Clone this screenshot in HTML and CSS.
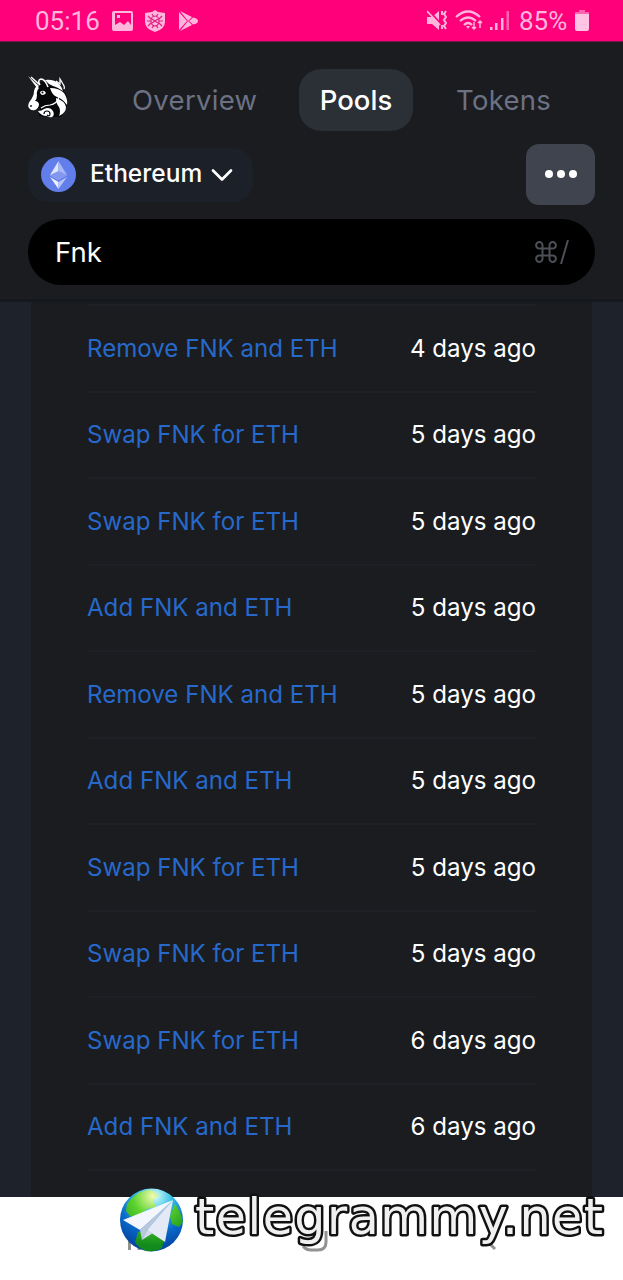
FILE: index.html
```html
<!DOCTYPE html>
<html lang="en">
<head>
	<meta charset="utf-8">
	<title>Uniswap Info</title>
	<link rel="stylesheet" href="styles.css">
</head>
<body>
	<div class="status-bar">
		<span class="clock">05:16</span>
		<svg class="status-left" width="90" height="24" viewBox="0 0 90 24">
			<path fill="#ffb5dc" fill-rule="evenodd" d="M1 2h18q2 0 2 2v16q0 2-2 2H2q-2 0-2-2V4q0-2 2-2zM3 4v12l5-3 4 3 4-4 3 4V4zM5 6h3v3H5z"/>
			<path fill="#ffb5dc" d="M43 1l3 2 7 1v9q0 7-10 10-10-3-10-10V4l7-1z"/>
			<g stroke="#d92383" stroke-width="1.2" fill="none">
				<path d="M36 7l3 3m-4 2h4m-3 5l3-3M50 7l-3 3m4 2h-4m3 5l-3-3M40 5l2 3m4-3l-2 3M40 19l2-3m4 3l-2-3"/>
				<ellipse cx="43" cy="12" rx="4" ry="5"/>
				<path d="M40 10l6 4m0-4l-6 4"/>
			</g>
			<path fill="#ffb5dc" d="M67 3v18l8-9zM68 2l12 6-4 4zM68 22l12-6-4-4z"/>
			<path fill="#ffb5dc" d="M77 12l4-3.500q5 1 5 3.500t-5 3.500z"/>
		</svg>
		<svg class="status-right" width="86" height="24" viewBox="0 0 86 24">
			<path fill="#ffb5dc" d="M0 8h5l7-6v19l-7-6H0z"/>
			<path stroke="#ff007a" stroke-width="2" d="M1 1l13 14"/>
			<path stroke="#ffb5dc" stroke-width="1.8" d="M0 2l13 14" fill="none"/>
			<path stroke="#ffb5dc" stroke-width="2" fill="none" d="M15 2v4M15 16v4M19 2l-2 3 2 3-2 3 2 3-2 3 2 3"/>
			<g stroke="#ffb5dc" stroke-width="2.2" fill="none">
				<path d="M29 8q12-11 24 0M33 12q8-7 16 0M37 16q4-4 8 0"/>
				<path stroke-width="1.500" d="M47 13v7m-2-2l2 2 2-2M53 19v-7m-2 2l2-2 2 2"/>
			</g>
			<path fill="#ffb5dc" d="M39 17h4l-2 3zM63 18h2.500v3H63zM68 14h2.500v7H68zM74 9h2.500v12H74z"/>
			<path fill="#ff63af" d="M79.500 2H82v19h-2.500z"/>
		</svg>
		<span class="battery-level">85%</span>
		<svg class="battery" width="14" height="21" viewBox="0 0 14 21">
			<path fill="#ff63af" d="M4 0h6v2h4v3H0V2h4z"/>
			<path fill="#ffc4e3" d="M0 4h14v15q0 2-2 2H2q-2 0-2-2z"/>
		</svg>
	</div>

	<header class="header">
		<nav class="nav">
			<svg class="logo" width="42" height="44" viewBox="0 0 42 44">
				<path fill="#060709" d="M8 11l5-5 10-1 9 4 7 11v10l-6 11-22-1 1-8-6 1z"/>
				<!-- horn and ear -->
				<path fill="#fff" d="M0 0l11 10-2 2z"/>
				<path fill="none" stroke="#fff" stroke-width="1.500" d="M3 1l9 8M12 9q-3-5 1-6 4 0 7 8"/>
				<!-- face -->
				<path fill="#fff" d="M9 10l2 2q-3 3-2 7 0 4-2 6 3 0 4 3 0 4-4 6-4 1-6-2-2-3 1-7 4-5 4-10 0-3 3-5z"/>
				<path fill="#fff" d="M12 16q4-3 6 1-1 2-4 2-2-1-2-3z"/>
				<circle cx="14.500" cy="16.500" r="1" fill="#060709"/>
				<circle cx="3" cy="30" r=".9" fill="#060709"/>
				<!-- mane -->
				<path fill="#fff" d="M17 4q9-1 14 4 3 3 4 7-6-4-10-5-5-2-8-6z"/>
				<path fill="none" stroke="#fff" stroke-width="1.300" d="M28 5l4 3V3l3 5q2 3 1 5"/>
				<path fill="#fff" d="M22 12q9 0 14 5 4 6 3 12-4-6-10-8-5-2-7-9z"/>
				<path fill="#fff" d="M28 22q9 3 10 9 0 6-7 9 2-5 0-9-3-3-3-9z"/>
				<path fill="none" stroke="#fff" stroke-width="1.200" d="M31 21q-2 7-9 8-5 0-9 3"/>
				<!-- neck curl -->
				<path fill="#fff" d="M10 35q4 0 6-2 6-3 9 2 2 4-1 6-3 1-5-1-6 0-9-5z"/>
				<path fill="none" stroke="#060709" stroke-width="1.200" d="M16 38q0-3 3-3t3 3-3 1"/>
			</svg>
			<a class="nav-link overview">Overview</a>
			<a class="nav-link active">Pools</a>
			<a class="nav-link tokens">Tokens</a>
		</nav>
		<div class="toolbar">
			<div class="network">
				<svg width="35" height="35" viewBox="0 0 35 35">
					<circle cx="17.500" cy="17.500" r="17.500" fill="#627eea"/>
					<path fill="#dfe5fb" d="M17.500 4L9 18l8.500 5z"/>
					<path fill="#a9b8f4" d="M17.500 4L26 18l-8.500 5z"/>
					<path fill="#8297ed" d="M9 18l8.500-4 8.500 4-8.500 5z"/>
					<path fill="#eef1fd" d="M9 20l8.500 5v7z"/>
					<path fill="#b7c4f6" d="M26 20l-8.500 5v7z"/>
				</svg>
				<span>Ethereum</span>
				<svg class="chevron" width="22" height="14" viewBox="0 0 22 14">
					<path d="M2 2.500l9 9 9-9" fill="none" stroke="#fff" stroke-width="2.700" stroke-linecap="round" stroke-linejoin="round"/>
				</svg>
			</div>
			<div class="more"><i></i><i></i><i></i></div>
		</div>
		<div class="search">
			<span>Fnk</span>
			<span class="shortcut">
				<svg width="22" height="22" viewBox="0 0 22 22" fill="none" stroke="#4c4f55" stroke-width="2">
					<path d="M7.500 7.500h7v7h-7zM7.500 7.500H4.500a3.200 3.200 0 1 1 3-3zM14.500 7.500v-3a3.200 3.200 0 1 1 3 3zM14.500 14.500h3a3.200 3.200 0 1 1-3 3zM7.500 14.500v3a3.200 3.200 0 1 1-3-3z"/>
				</svg>
				<svg width="9" height="26" viewBox="0 0 9 26">
					<path d="M8 1L1 25" stroke="#4c4f55" stroke-width="2"/>
				</svg>
			</span>
		</div>
	</header>

	<main class="page">
		<div class="transactions">
			<div class="row"><a>Remove FNK and ETH</a><span>4 days ago</span></div>
			<div class="row"><a>Swap FNK for ETH</a><span>5 days ago</span></div>
			<div class="row"><a>Swap FNK for ETH</a><span>5 days ago</span></div>
			<div class="row"><a>Add FNK and ETH</a><span>5 days ago</span></div>
			<div class="row"><a>Remove FNK and ETH</a><span>5 days ago</span></div>
			<div class="row"><a>Add FNK and ETH</a><span>5 days ago</span></div>
			<div class="row"><a>Swap FNK for ETH</a><span>5 days ago</span></div>
			<div class="row"><a>Swap FNK for ETH</a><span>5 days ago</span></div>
			<div class="row"><a>Swap FNK for ETH</a><span>6 days ago</span></div>
			<div class="row"><a>Add FNK and ETH</a><span>6 days ago</span></div>
		</div>
	</main>

	<footer class="nav-bar">
		<svg width="623" height="83" viewBox="0 0 623 83" fill="none" stroke="#929292" stroke-width="3">
			<path d="M129.500 42v11M139 47v6M303 49q3 4 8 4h7q8 0 8-8V34M489 46l6 6"/>
		</svg>
	</footer>

	<div class="watermark">
		<svg width="503" height="75" viewBox="0 0 503 75">
			<defs>
				<radialGradient id="sea" cx="55%" cy="12%" r="90%">
					<stop offset="0" stop-color="#d9fff5"/>
					<stop offset=".3" stop-color="#36bfe8"/>
					<stop offset=".65" stop-color="#0868c9"/>
					<stop offset="1" stop-color="#063d9b"/>
				</radialGradient>
				<radialGradient id="land" gradientUnits="userSpaceOnUse" cx="33" cy="8" r="50">
					<stop offset="0" stop-color="#f1fbb0"/>
					<stop offset=".4" stop-color="#5cd32c"/>
					<stop offset="1" stop-color="#128a1c"/>
				</radialGradient>
			</defs>
			<circle cx="31.500" cy="32" r="31.500" fill="url(#sea)"/>
			<path fill="url(#land)" d="M7 16Q17 2 31 2l8 5-6 5 3 7-9 2-8 8-9-1-4-5zM55 16q6 8 8 18l-4 5-7-3-2-8zM18 44l12-2 14 10-2 8q-7 4-16 3-9-4-11-9z"/>
			<!-- paper plane -->
			<path fill="#f3f7fd" d="M3 32L53 12 20 42z"/>
			<path fill="#b9c7dd" d="M20 42l33-30-26 30-5 10z"/>
			<path fill="#e3eaf5" d="M27 42l26-30-8 42z"/>
			<path fill="#d0daeb" d="M22 52l5-10 6 3z"/>
			<text class="watermark-text" x="75" y="46" textLength="408">telegrammy.net</text>
		</svg>
	</div>
</body>
</html>
```
FILE: styles.css
```css
* {
	box-sizing: border-box;
}
body {
	font-family: Inter, "Liberation Sans", sans-serif;
	margin: 0;
	height: 1280px;
	overflow: hidden;
	position: relative;
	background-color: #fff;
	color: #fff;
}
svg {
	display: block;
	flex: none;
}
.status-bar {
	display: flex;
	align-items: center;
	height: 42px;
	padding: 0 34px 0 35px;
	background-color: #ff007a;
	border-bottom: 1px solid #7d1245;
	font-family: Roboto, sans-serif;
	font-size: 26px;
	color: #ffb5dc;
}
.clock {
	width: 77px;
}
.status-right {
	margin-left: auto;
}
.battery-level {
	width: 49px;
	margin: 0 7px 0 6px;
	font-size: 26px;
	white-space: nowrap;
}
.header {
	height: 260px;
	padding: 27px 28px 0;
	background-color: #1a1c20;
	border-bottom: 3px solid #15181c;
}
.nav {
	display: flex;
	align-items: center;
	height: 62px;
}
.logo {
	margin-top: -4px;
}
.nav-link {
	font-size: 27.5px;
	color: #6c7284;
}
.overview {
	width: 167px;
	margin-left: 62px;
	letter-spacing: 0.3px;
}
.active {
	width: 114px;
	line-height: 62px;
	text-align: center;
	border-radius: 22px;
	background-color: #2b2f36;
	font-weight: 500;
	color: #fff;
}
.tokens {
	margin-left: 43px;
	letter-spacing: 0.3px;
}
.toolbar {
	display: flex;
	justify-content: space-between;
	align-items: center;
	height: 61px;
	margin-top: 13px;
}
.network {
	display: flex;
	align-items: center;
	width: 225px;
	height: 54px;
	padding-left: 13px;
	border-radius: 20px;
	background-color: #1c2028;
	font-size: 24.5px;
	font-weight: 500;
}
.network span {
	margin: -3px 0 0 14px;
	width: 121px;
}
.more {
	display: flex;
	justify-content: center;
	align-items: center;
	gap: 4px;
	width: 69px;
	height: 61px;
	padding-bottom: 2px;
	border-radius: 13px;
	background-color: #40444f;
}
.more i {
	width: 8px;
	height: 8px;
	border-radius: 50%;
	background-color: #fff;
}
.search {
	display: flex;
	justify-content: space-between;
	align-items: center;
	height: 66px;
	margin-top: 14px;
	padding: 0 26px 0 27px;
	border-radius: 33px;
	background-color: #000;
	font-size: 27.5px;
}
.shortcut {
	display: flex;
	align-items: center;
	gap: 3px;
}
.page {
	height: 895px;
	padding: 0 31px;
	background-color: #1e222a;
}
.transactions {
	height: 895px;
	padding: 2px 56px 0;
	background-color: #1a1c1f;
}
.row {
	display: flex;
	justify-content: space-between;
	align-items: center;
	height: 86.5px;
	border-top: 2px solid #1d2126;
	font-size: 24.1px;
}
.row:last-child {
	height: 88.5px;
	border-bottom: 2px solid #1d2126;
}
.row a {
	color: #2769cb;
}
.nav-bar {
	height: 83px;
	background-color: #fff;
}
.watermark {
	position: absolute;
	left: 120px;
	top: 1188px;
}
.watermark-text {
	font-family: "DejaVu Sans", sans-serif;
	font-size: 49px;
	fill: #f0f0f0;
	stroke: #111;
	stroke-width: 5px;
	stroke-linejoin: round;
	paint-order: stroke;
}
```
